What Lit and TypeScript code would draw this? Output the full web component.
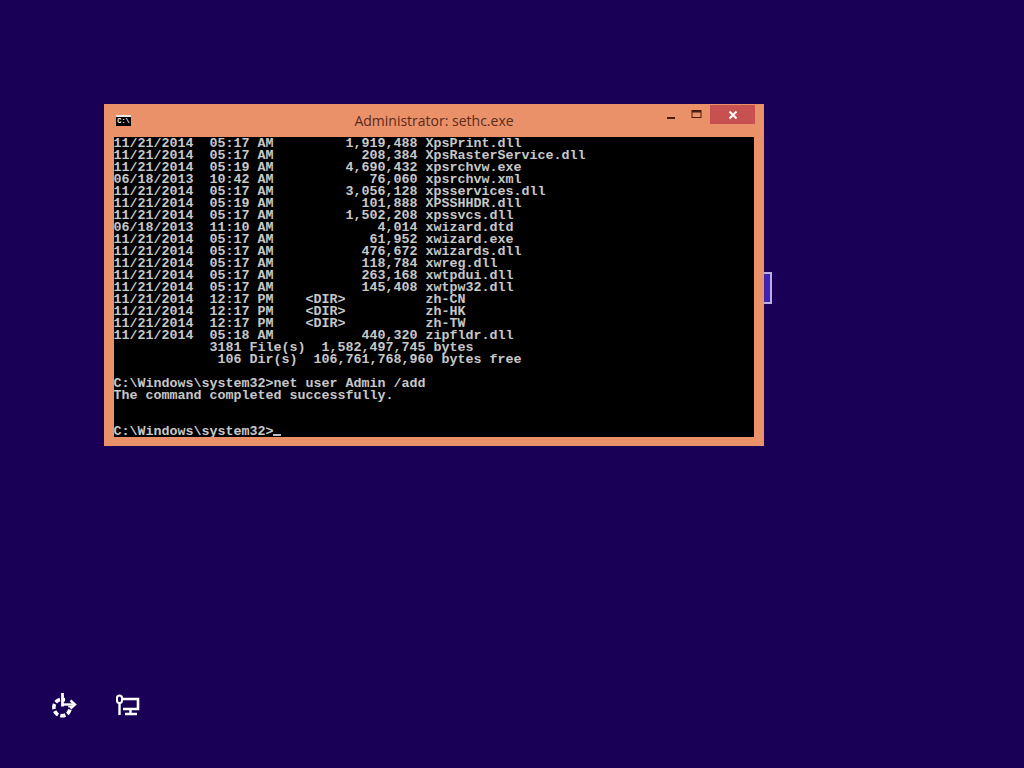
import { LitElement, html, css } from "lit";
import { customElement } from "lit/decorators.js";

const LINES = [
  "11/21/2014  05:17 AM         1,919,488 XpsPrint.dll",
  "11/21/2014  05:17 AM           208,384 XpsRasterService.dll",
  "11/21/2014  05:19 AM         4,690,432 xpsrchvw.exe",
  "06/18/2013  10:42 AM            76,060 xpsrchvw.xml",
  "11/21/2014  05:17 AM         3,056,128 xpsservices.dll",
  "11/21/2014  05:19 AM           101,888 XPSSHHDR.dll",
  "11/21/2014  05:17 AM         1,502,208 xpssvcs.dll",
  "06/18/2013  11:10 AM             4,014 xwizard.dtd",
  "11/21/2014  05:17 AM            61,952 xwizard.exe",
  "11/21/2014  05:17 AM           476,672 xwizards.dll",
  "11/21/2014  05:17 AM           118,784 xwreg.dll",
  "11/21/2014  05:17 AM           263,168 xwtpdui.dll",
  "11/21/2014  05:17 AM           145,408 xwtpw32.dll",
  "11/21/2014  12:17 PM    <DIR>          zh-CN",
  "11/21/2014  12:17 PM    <DIR>          zh-HK",
  "11/21/2014  12:17 PM    <DIR>          zh-TW",
  "11/21/2014  05:18 AM           440,320 zipfldr.dll",
  "            3181 File(s)  1,582,497,745 bytes",
  "             106 Dir(s)  106,761,768,960 bytes free",
  "",
  "C:\\Windows\\system32>net user Admin /add",
  "The command completed successfully.",
  "",
  "",
];

@customElement("app-root")
export class AppRoot extends LitElement {
  static styles = css`
    :host {
      display: block;
      width: 1024px;
      height: 768px;
      overflow: hidden;
    }
    .desktop {
      position: relative;
      width: 1024px;
      height: 768px;
      background: #190056;
      box-sizing: border-box;
      padding: 104px 0 0 104px;
      display: flex;
      flex-direction: column;
    }
    .peek {
      position: absolute;
      left: 760px;
      top: 272px;
      width: 12px;
      height: 32px;
      box-sizing: border-box;
      background: #3d23b0;
      border: 2px solid #b9aee6;
    }
    .window {
      position: relative;
      width: 660px;
      height: 342px;
      box-sizing: border-box;
      background: #ea916a;
      display: flex;
      flex-direction: column;
    }
    .titlebar {
      position: relative;
      height: 33px;
      flex: none;
      display: flex;
      align-items: flex-start;
      padding: 1px 9px 0 12px;
      box-sizing: border-box;
    }
    .appicon {
      width: 15px;
      height: 11px;
      margin-top: 10px;
      flex: none;
      background: #000;
      border-top: 2px solid #e8e8e8;
      box-sizing: border-box;
      color: #fff;
      font: bold 7px/8px "Liberation Mono", monospace;
      text-align: center;
      overflow: hidden;
    }
    .title {
      flex: 1;
      text-align: center;
      font: 14px/31px "Open Sans", sans-serif;
      color: #5a2a1a;
      padding-left: 79px;
    }
    .controls {
      display: flex;
      align-items: flex-start;
      flex: none;
    }
    .ctl {
      display: flex;
      align-items: center;
      justify-content: center;
      width: 26px;
      height: 19px;
    }
    .ctl svg { display: block; }
    .close {
      width: 45px;
      background: #c75050;
    }
    .terminal {
      width: 640px;
      height: 300px;
      margin-left: 10px;
      padding-top: 1px;
      box-sizing: border-box;
      background: #000;
      color: #c8c8c8;
      font: bold 13.33px/12px "Liberation Mono", monospace;
      white-space: pre;
      overflow: hidden;
    }
    .line {
      height: 12px;
      text-indent: -0.5px;
    }
    .cursor {
      display: inline-block;
      width: 8px;
      height: 2px;
      background: #c0c0c0;
      vertical-align: -1px;
    }
    .bottom {
      position: absolute;
      left: 51px;
      top: 692px;
      display: flex;
      gap: 39px;
      align-items: flex-start;
    }
    .bottom svg { display: block; }
  `;

  render() {
    return html`
      <div class="desktop">
        <div class="peek"></div>
        <div class="window">
          <div class="titlebar">
            <div class="appicon">C:\\</div>
            <div class="title">Administrator: sethc.exe</div>
            <div class="controls">
              <div class="ctl">
                <svg width="10" height="10" viewBox="0 0 10 10"><rect x="1" y="7" width="8" height="2" fill="#4a1d0c" /></svg>
              </div>
              <div class="ctl">
                <svg width="12" height="10" viewBox="0 0 12 10"><rect x="1" y="0.5" width="9" height="7" fill="none" stroke="#4a1d0c" stroke-width="1" /><rect x="1" y="0.5" width="9" height="2" fill="#4a1d0c" /></svg>
              </div>
              <div class="ctl close">
                <svg width="10" height="10" viewBox="0 0 10 10"><path d="M1.5 1.5L8.5 8.5M8.5 1.5L1.5 8.5" stroke="#fff" stroke-width="2" /></svg>
              </div>
            </div>
          </div>
          <div class="terminal">${LINES.map(
            (l) => html`<div class="line">${l}</div>`
          )}<div class="line">C:\\Windows\\system32&gt;<span class="cursor"></span></div></div>
        </div>
        <div class="bottom">
          <svg width="26" height="26" viewBox="0 0 26 26" fill="none" stroke="#fff">
            <circle cx="11" cy="15.5" r="8.2" stroke-width="3.6" stroke-dasharray="3.6 1.55" pathLength="36" transform="rotate(-140 11 15.5)" />
            <path d="M14 6H26V14H14Z" fill="#190056" stroke="none" />
            <path d="M11.5 1V14.5" stroke-width="2.8" />
            <path d="M11.5 12.5H23" stroke-width="2.4" />
            <path d="M19.5 8.5L24 12.5L19.5 16.5" stroke-width="2.4" />
          </svg>
          <svg width="24" height="24" viewBox="0 0 24 24" fill="none" stroke="#fff">
            <rect x="1" y="3.5" width="5" height="7.5" rx="2.5" stroke-width="2" />
            <path d="M3.5 11V23" stroke-width="2.4" />
            <path d="M7 7H22V17H7" stroke-width="2.6" />
            <path d="M14.5 17V21.5M9 22H21" stroke-width="2.4" />
          </svg>
        </div>
      </div>
    `;
  }
}
